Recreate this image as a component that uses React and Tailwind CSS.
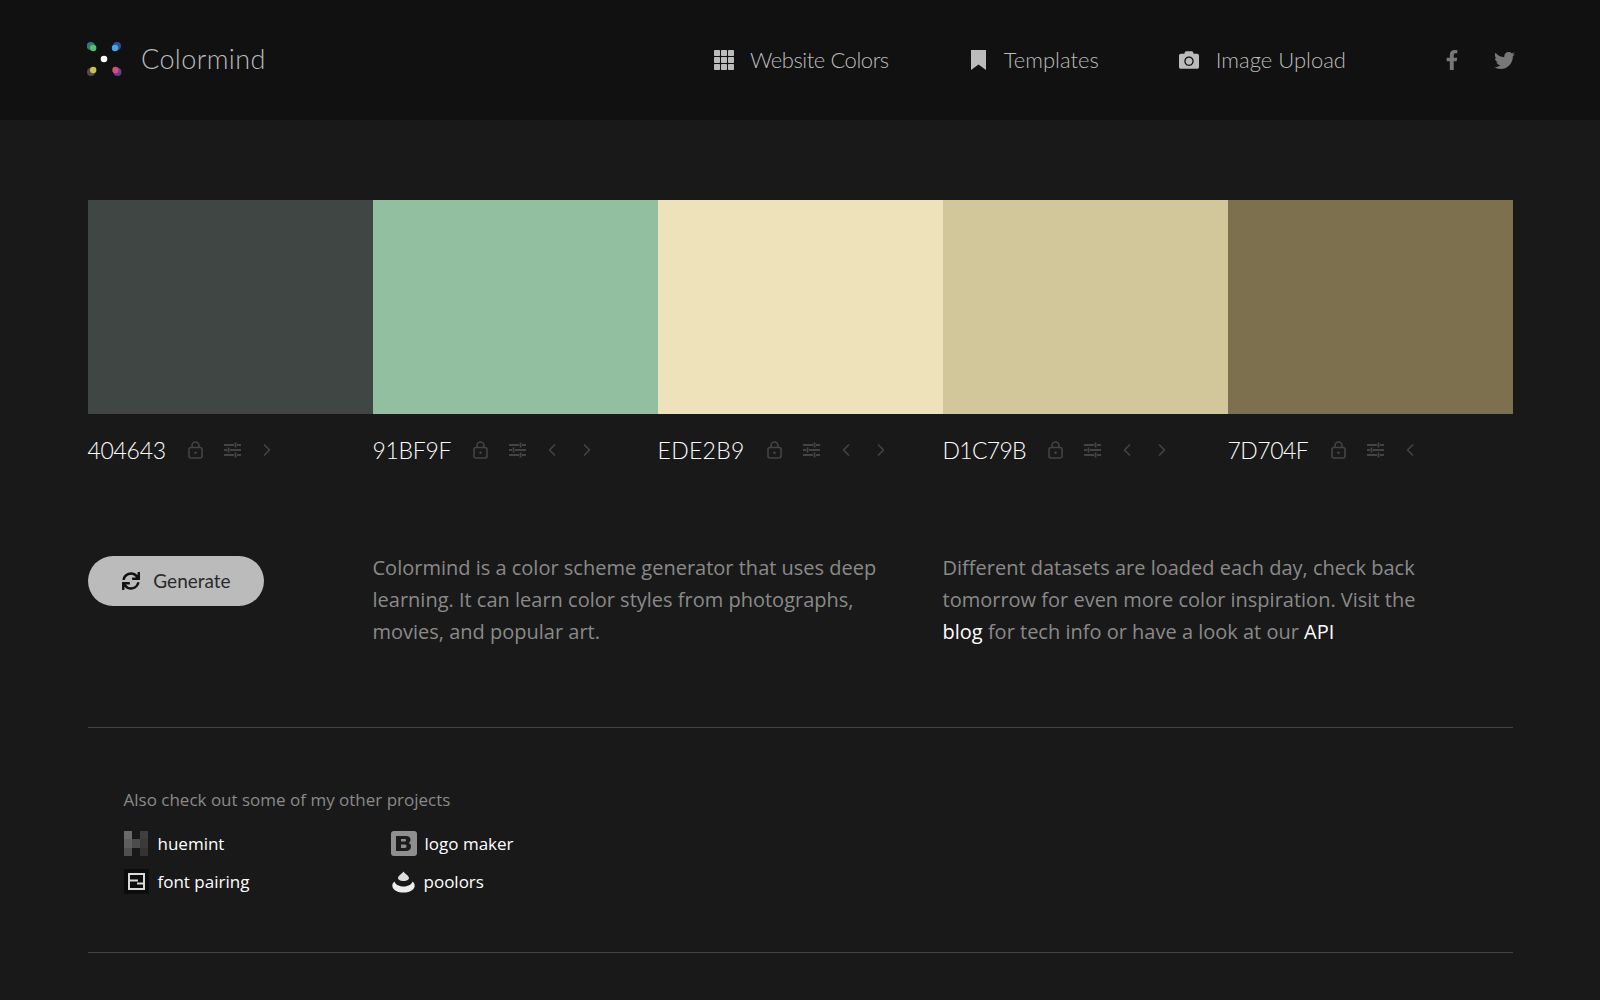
import { FaCamera, FaFacebookF, FaTwitter, FaSync } from 'react-icons/fa';
import { ChevronLeft, ChevronRight } from 'lucide-react';

const swatches = [
  { hex: '404643', bg: 'bg-[#404643]', label: 'w-[100px] tracking-[-0.3px]', left: false, right: true },
  { hex: '91BF9F', bg: 'bg-[#91bf9f]', label: 'w-[100px] tracking-[-0.3px]', left: true, right: true },
  { hex: 'EDE2B9', bg: 'bg-[#ede2b9]', label: 'w-[109px] tracking-[0.3px]', left: true, right: true },
  { hex: 'D1C79B', bg: 'bg-[#d1c79b]', label: 'w-[105px] tracking-[-0.7px]', left: true, right: true },
  { hex: '7D704F', bg: 'bg-[#7d704f]', label: 'w-[103px] tracking-[-0.5px]', left: true, right: false },
];

function Logo() {
  return (
    <svg width="36" height="36" viewBox="0 0 36 36">
      <circle cx="3.700" cy="4" r="4" fill="#2f7a78" />
      <circle cx="6.200" cy="6" r="3.200" fill="#5dbb6c" />
      <circle cx="30" cy="4" r="4" fill="#2f4f98" />
      <circle cx="28" cy="6" r="3.200" fill="#4aa8e8" />
      <circle cx="17" cy="17" r="3.300" fill="#ffffff" />
      <circle cx="4" cy="30" r="4" fill="#5a4a44" />
      <circle cx="6.200" cy="28" r="3.200" fill="#c4c44c" />
      <circle cx="30.500" cy="30" r="4" fill="#6e3a8c" />
      <circle cx="28.500" cy="28" r="3.200" fill="#d0527a" />
    </svg>
  );
}

function GridIcon() {
  const cells = [0, 7, 14];
  return (
    <svg width="20" height="20" viewBox="0 0 20 20" fill="#bbbbbb" className="mr-[16px]">
      {cells.map(y => cells.map(x => <rect key={`${x}-${y}`} x={x} y={y} width="6" height="6" rx="0.8" />))}
    </svg>
  );
}

function BookmarkIcon() {
  return (
    <svg width="15" height="20" viewBox="0 0 15 20" fill="#bbbbbb" className="mr-[18px]">
      <path d="M0 0h15v20l-7.500-5.500L0 20z" />
    </svg>
  );
}

function LockIcon() {
  return (
    <svg width="15" height="18" viewBox="0 0 15 18" fill="none" stroke="#444" strokeWidth="1.600">
      <rect x="1" y="6.500" width="13" height="10.500" rx="2" />
      <path d="M4 6.500V4.500a3.500 3.500 0 0 1 7 0v2" />
      <circle cx="7.500" cy="11.800" r="1.300" fill="#444" stroke="none" />
    </svg>
  );
}

function SlidersIcon() {
  return (
    <svg width="17" height="16" viewBox="0 0 17 16" fill="none" stroke="#444" strokeWidth="1.800">
      <path d="M0 3h10M13 3h4M11.500 0.500v5M0 8h3M6 8h11M4.500 5.500v5M0 13h10M13 13h4M11.500 10.500v5" />
    </svg>
  );
}

function NavItem({ icon, label, className }) {
  return (
    <a className={`flex items-center text-[22px] text-[#bbbbbb] ${className}`}>
      {icon}
      <span className="pb-[2px]">{label}</span>
    </a>
  );
}

function HuemintIcon() {
  return (
    <div className="grid grid-cols-3 grid-rows-3 w-[25px] h-[25px]">
      <div className="bg-[#6a6a6a]" />
      <div />
      <div className="bg-[#3f3f3f]" />
      <div className="bg-[#5e5e5e]" />
      <div className="bg-[#4c4c4c]" />
      <div className="bg-[#3a3a3a]" />
      <div className="bg-[#505050]" />
      <div />
      <div className="bg-[#333333]" />
    </div>
  );
}

function FontIcon() {
  return (
    <div className="w-[25px] h-[25px] bg-[#0c0c0c] flex items-center justify-center">
      <svg width="17" height="17" viewBox="0 0 17 17" fill="none" stroke="#d8d8d8" strokeWidth="2">
        <rect x="1" y="1" width="15" height="15" />
        <path d="M1 7.500h9M9 10.500h7" />
      </svg>
    </div>
  );
}

function LogoMakerIcon() {
  return (
    <div className="w-[26px] h-[25px] rounded-[3px] bg-[#8f8f8f] flex items-center justify-center">
      <svg width="17" height="15" viewBox="0 0 17 15">
        <path fillRule="evenodd" fill="#1c1c1c" d="M1 0h10c3 0 4.500 1.500 4.500 3.800 0 1.500-.8 2.700-2 3.200 1.600.5 2.500 1.800 2.500 3.500 0 2.800-2 4.500-5 4.500H1zM6 3v2.500h3.500c1 0 1.500-.4 1.500-1.200S10.500 3 9.500 3zM6 8.500V12h4c1 0 1.500-.6 1.500-1.700S11 8.500 10 8.500z" />
      </svg>
    </div>
  );
}

function PoolorsIcon() {
  return (
    <svg width="25" height="25" viewBox="0 0 25 25">
      <path fill="#dddddd" d="M12.500 2.500c1 2 5 3.500 5.500 6.500.2 1.500-2 3-5.500 3s-5.700-1.500-5.500-3c.5-3 3.500-3.500 5.500-6.500z" />
      <path fill="#eeeeee" d="M3.500 12.500c-2 1.500-2.500 3.500-2 5.500 1 3.500 5.500 5.500 11 5.500s10-2 11-5.500c.5-2 0-4-2-5.500-.5 2.500-4 5-9 5s-8.500-2.500-9-5z" />
    </svg>
  );
}

export default function App() {
  return (
    <div className="min-h-screen bg-[#191919] font-['Open_Sans',sans-serif]">
      {/* Header */}
      <header className="h-[120px] bg-[#111111] pl-[87px] pr-[85px] flex items-center font-['Lato',sans-serif] font-light">
        <div className="flex items-center">
          <Logo />
          <span className="ml-[18px] pb-[2px] text-[27px] tracking-[0.4px] text-[#bbbbbb]">Colormind</span>
        </div>
        <nav className="ml-auto flex items-center">
          <NavItem className="tracking-[-0.45px]" icon={<GridIcon />} label="Website Colors" />
          <NavItem className="ml-[82px]" icon={<BookmarkIcon />} label="Templates" />
          <NavItem className="ml-[80px]" icon={<FaCamera size={20} className="mr-[17px]" />} label="Image Upload" />
          <div className="ml-[96px] flex items-center text-[#777777]">
            <FaFacebookF size={20} />
            <FaTwitter size={21} className="ml-[32px]" />
          </div>
        </nav>
      </header>

      <main className="px-[87.5px] pt-[80px]">
        {/* Palette */}
        <div className="grid grid-cols-5">
          {swatches.map(s => (
            <div key={s.hex}>
              <div className={`h-[214px] ${s.bg}`} />
              <div className="mt-[20px] h-[32px] flex items-center font-['Lato',sans-serif] font-light">
                <span className={`text-[23px] text-white ${s.label}`}>{s.hex}</span>
                <LockIcon />
                <span className="ml-[21px]"><SlidersIcon /></span>
                <span className="ml-[16px] flex items-center gap-[15px] text-[#444444]">
                  {s.left && <ChevronLeft size={20} strokeWidth={2} />}
                  {s.right && <ChevronRight size={20} strokeWidth={2} />}
                </span>
              </div>
            </div>
          ))}
        </div>

        {/* Generate + description */}
        <div className="mt-[86px] grid grid-cols-5">
          <div className="pt-[4px]">
            <button className="w-[176px] h-[50px] rounded-full bg-[#bbbbbb] flex items-center justify-center text-[#2a2a2a] text-[19px] font-['Lato',sans-serif]">
              <FaSync size={18} className="mr-[13px] text-[#111111] ml-[2px]" />
              Generate
            </button>
          </div>
          <p className="col-span-2 pr-[55px] text-[20px] leading-[32px] text-[#8a8a8a]">
            Colormind is a color scheme generator that uses deep learning. It can learn color styles from photographs, movies, and popular art.
          </p>
          <p className="col-span-2 pr-[80px] text-[20px] leading-[32px] text-[#8a8a8a]">
            Different datasets are loaded each day, check back tomorrow for even more color inspiration. Visit the <a className="text-white">blog</a> for tech info or have a look at our <a className="text-white">API</a>
          </p>
        </div>

        <hr className="mt-[79px] border-[#444444]" />

        {/* Other projects */}
        <section className="pl-[36px] pt-[60px] pb-[58px]">
          <div className="text-[17px] leading-[24px] text-[#8a8a8a]">Also check out some of my other projects</div>
          <div className="mt-[19px] grid grid-cols-[267px_200px] gap-y-[13px] text-[17px] text-white">
            <a className="flex items-center gap-[9px] h-[25px]"><HuemintIcon />huemint</a>
            <a className="flex items-center gap-[8px] h-[25px]"><LogoMakerIcon />logo maker</a>
            <a className="flex items-center gap-[9px] h-[25px]"><FontIcon />font pairing</a>
            <a className="flex items-center gap-[8px] h-[25px]"><PoolorsIcon />poolors</a>
          </div>
        </section>

        <hr className="border-[#444444]" />
      </main>
    </div>
  );
}
